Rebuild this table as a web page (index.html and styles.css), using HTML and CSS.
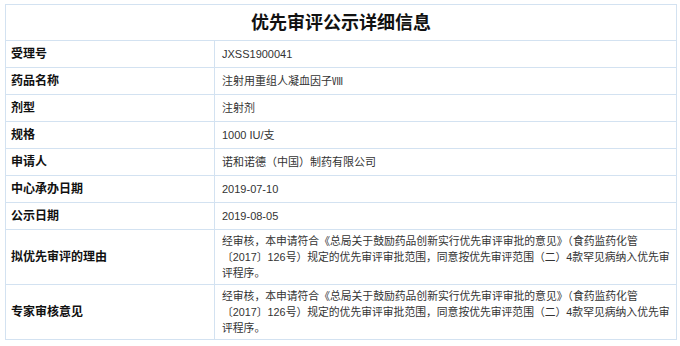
FILE: index.html
```html
<!DOCTYPE html>
<html lang="zh">
<head>
<meta charset="utf-8">
<title>优先审评公示详细信息</title>
<link rel="stylesheet" href="styles.css">
</head>
<body>
<div class="page">
<table class="info">
  <colgroup><col class="col-label"><col class="col-value"></colgroup>
  <tr><th class="title" colspan="2">优先审评公示详细信息</th></tr>
  <tr><td class="label">受理号</td><td class="value">JXSS1900041</td></tr>
  <tr><td class="label">药品名称</td><td class="value">注射用重组人凝血因子Ⅷ</td></tr>
  <tr><td class="label">剂型</td><td class="value">注射剂</td></tr>
  <tr><td class="label">规格</td><td class="value">1000 IU/支</td></tr>
  <tr><td class="label">申请人</td><td class="value">诺和诺德（中国）制药有限公司</td></tr>
  <tr><td class="label">中心承办日期</td><td class="value">2019-07-10</td></tr>
  <tr><td class="label">公示日期</td><td class="value">2019-08-05</td></tr>
  <tr><td class="label">拟优先审评的理由</td><td class="value para">经审核，本申请符合《总局关于鼓励药品创新实行优先审评审批的意见》（食药监药化管<br>〔2017〕126号）规定的优先审评审批范围，同意按优先审评范围（二）4款罕见病纳入优先审<br>评程序。</td></tr>
  <tr><td class="label">专家审核意见</td><td class="value para">经审核，本申请符合《总局关于鼓励药品创新实行优先审评审批的意见》（食药监药化管<br>〔2017〕126号）规定的优先审评审批范围，同意按优先审评范围（二）4款罕见病纳入优先审<br>评程序。</td></tr>
</table>
</div>
</body>
</html>
```

FILE: styles.css
```css
html, body {
  margin: 0;
  padding: 0;
  background: #ffffff;
}
body {
  font-family: "Liberation Sans", "Noto Sans CJK SC", sans-serif;
}
.page {
  padding: 4px 0 0 5px;
}
.info {
  border-collapse: collapse;
  width: 671px;
  table-layout: fixed;
  border: 1px solid #d3e2f1;
}
.col-label {
  width: 209px;
}
.col-value {
  width: 462px;
}
.info td, .info th {
  border: 1px solid #d3e2f1;
  vertical-align: middle;
  text-align: left;
}
.title {
  height: 35px;
  padding: 0;
  text-align: center !important;
  font-size: 18px;
  font-weight: bold;
  color: #111;
  line-height: 20px;
}
.label {
  padding: 5px 0 5px 5px;
  font-size: 12px;
  font-weight: bold;
  color: #111;
  line-height: 16px;
  height: 16px;
}
.value {
  padding: 5px 4px 5px 7px;
  font-size: 11px;
  color: #333;
  line-height: 16px;
}
.value.para {
  padding-top: 3px;
  padding-bottom: 3px;
  font-size: 10.8px;
  white-space: nowrap;
  overflow: hidden;
}
```
